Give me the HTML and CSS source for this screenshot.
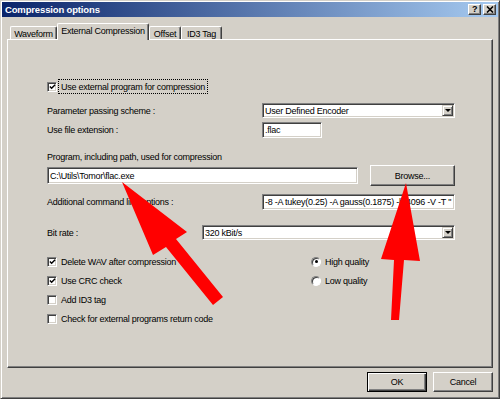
FILE: index.html
```html
<!DOCTYPE html>
<html lang="en">
<head>
    <meta charset="UTF-8">
    <meta name="viewport" content="width=device-width, initial-scale=1.0">
    <title>Compression options</title>
    <link rel="stylesheet" href="styles.css">
</head>
<body>
    <div class="window">
        <div class="titlebar">
            <span class="title">Compression options</span>
            <div class="caption-buttons">
                <span class="caption-btn">?</span>
                <span class="caption-btn">
                    <svg width="8" height="7" viewBox="0 0 8 7"><path d="M1 0.5 L7 6.5 M7 0.5 L1 6.5" stroke="#000" stroke-width="1.6"/></svg>
                </span>
            </div>
        </div>

        <div class="dialog">
            <div class="tabs">
                <div class="tab tab-waveform">Waveform</div>
                <div class="tab tab-external active">External Compression</div>
                <div class="tab tab-offset">Offset</div>
                <div class="tab tab-id3">ID3 Tag</div>
            </div>

            <div class="panel">
                <div class="check-row top-check">
                    <span class="checkbox checked">
                        <svg width="8" height="8" viewBox="0 0 8 8"><path d="M1 3.5 L3 5.5 L7 1.5" stroke="#000" stroke-width="1.7" fill="none"/></svg>
                    </span>
                    <span class="focus-label">Use external program for compression</span>
                </div>

                <div class="field-row row-scheme">
                    <span>Parameter passing scheme :</span>
                    <div class="field combo">
                        <span>User Defined Encoder</span>
                        <span class="combo-btn"><span class="tri"></span></span>
                    </div>
                </div>

                <div class="field-row row-ext">
                    <span>Use file extension :</span>
                    <div class="field ext-field">.flac</div>
                </div>

                <div class="program-label">Program, including path, used for compression</div>

                <div class="program-row">
                    <div class="field path-field">C:\Utils\Tomor\flac.exe</div>
                    <div class="btn browse-btn">Browse...</div>
                </div>

                <div class="field-row row-options">
                    <span>Additional command line options :</span>
                    <div class="field cmd-field">-8 -A tukey(0.25) -A gauss(0.1875) -b 4096 -V -T "</div>
                </div>

                <div class="field-row row-bitrate">
                    <span>Bit rate :</span>
                    <div class="field combo">
                        <span>320 kBit/s</span>
                        <span class="combo-btn"><span class="tri"></span></span>
                    </div>
                </div>

                <div class="options">
                    <div class="option-col checks">
                        <div class="opt">
                            <span class="checkbox checked">
                                <svg width="8" height="8" viewBox="0 0 8 8"><path d="M1 3.5 L3 5.5 L7 1.5" stroke="#000" stroke-width="1.7" fill="none"/></svg>
                            </span>
                            <span>Delete WAV after compression</span>
                        </div>
                        <div class="opt">
                            <span class="checkbox checked">
                                <svg width="8" height="8" viewBox="0 0 8 8"><path d="M1 3.5 L3 5.5 L7 1.5" stroke="#000" stroke-width="1.7" fill="none"/></svg>
                            </span>
                            <span>Use CRC check</span>
                        </div>
                        <div class="opt">
                            <span class="checkbox"></span>
                            <span>Add ID3 tag</span>
                        </div>
                        <div class="opt">
                            <span class="checkbox"></span>
                            <span>Check for external programs return code</span>
                        </div>
                    </div>
                    <div class="option-col radios">
                        <div class="opt">
                            <span class="radio selected"></span>
                            <span>High quality</span>
                        </div>
                        <div class="opt">
                            <span class="radio"></span>
                            <span>Low quality</span>
                        </div>
                    </div>
                </div>
            </div>

            <div class="footer">
                <div class="btn default">OK</div>
                <div class="btn">Cancel</div>
            </div>
        </div>

        <!-- red arrows pasted over the screenshot -->
        <svg class="arrows" width="500" height="399" viewBox="0 0 500 399">
            <polygon points="121,181 186,231 175,238 222,296 212,304 165,246 152,254" fill="#ff0000"/>
            <polygon points="405,182 419,260 403,259 398,319 390,319 393,259 380,258" fill="#ff0000"/>
        </svg>
    </div>
</body>
</html>
```

FILE: styles.css
```css
body {
    margin: 0;
    width: 500px;
    height: 399px;
    overflow: hidden;
    background-color: #d4d0c8;
    font-family: "Liberation Sans", Arial, sans-serif;
    font-size: 9px;
    letter-spacing: -0.25px;
    color: #000;
}
.window {
    position: relative;
    box-sizing: border-box;
    height: 399px;
    padding: 1px;
    border: 1px solid;
    border-color: #d4d0c8 #404040 #404040 #d4d0c8;
    box-shadow: inset 1px 1px #fff, inset -1px -1px #808080;
}
.titlebar {
    height: 15px;
    display: flex;
    align-items: center;
    justify-content: space-between;
    padding: 0 2px 0 3px;
    background: linear-gradient(to right, #0a246a, #a6caf0);
}
.title {
    color: #fff;
    font-weight: bold;
    font-size: 9.5px;
    letter-spacing: -0.15px;
}
.caption-buttons {
    display: flex;
    gap: 2px;
}
.caption-btn {
    box-sizing: border-box;
    width: 13px;
    height: 11px;
    display: flex;
    align-items: center;
    justify-content: center;
    background-color: #d4d0c8;
    border: 1px solid;
    border-color: #fff #404040 #404040 #fff;
    box-shadow: inset -1px -1px #808080;
    font-weight: bold;
    font-size: 9px;
    line-height: 1;
}
.dialog {
    padding: 0 5px;
}
.tabs {
    display: flex;
    align-items: flex-end;
    margin: 6px 0 0 3px;
}
.tab {
    box-sizing: border-box;
    height: 13px;
    display: flex;
    align-items: center;
    justify-content: center;
    white-space: nowrap;
    border-top: 1px solid #fff;
    border-left: 1px solid #fff;
    border-right: 1px solid #404040;
    border-radius: 2px 2px 0 0;
    box-shadow: inset -1px 0 #808080;
    padding-top: 1px;
}
.tab.active {
    position: relative;
    z-index: 1;
    height: 17px;
    margin-bottom: -1px;
    padding-bottom: 3px;
    background-color: #d4d0c8;
}
.tab-waveform { width: 47px; }
.tab-external { width: 92px; }
.tab-offset { width: 32px; }
.tab-id3 { width: 41px; }
.panel {
    box-sizing: border-box;
    height: 329px;
    padding: 0 37px 0 39px;
    border: 1px solid;
    border-color: #fff #404040 #404040 #fff;
    box-shadow: inset -1px -1px #808080;
}
.check-row {
    display: flex;
    align-items: center;
    height: 15px;
}
.top-check {
    margin-top: 39px;
}
.checkbox {
    box-sizing: border-box;
    width: 10px;
    height: 10px;
    flex: none;
    display: flex;
    align-items: center;
    justify-content: center;
    background-color: #fff;
    border: 1px solid;
    border-color: #808080 #fff #fff #808080;
    box-shadow: inset 1px 1px #404040, inset -1px -1px #d4d0c8;
}
.checkbox svg {
    margin: 1px 0 0 1px;
}
.focus-label {
    box-sizing: border-box;
    height: 15px;
    display: flex;
    align-items: center;
    margin-left: 1px;
    padding: 0 2px;
    border: 1px dotted #000;
}
.field-row {
    display: grid;
    grid-template-columns: 215px 1fr;
    align-items: center;
}
.field {
    box-sizing: border-box;
    display: flex;
    align-items: center;
    padding-left: 2px;
    background-color: #fff;
    border: 1px solid;
    border-color: #808080 #fff #fff #808080;
    box-shadow: inset 1px 1px #404040, inset -1px -1px #d4d0c8;
    white-space: nowrap;
    overflow: hidden;
}
.combo {
    height: 15px;
    justify-content: space-between;
    padding-right: 1px;
}
.combo-btn {
    box-sizing: border-box;
    width: 11px;
    height: 11px;
    display: flex;
    align-items: center;
    justify-content: center;
    background-color: #d4d0c8;
    border: 1px solid;
    border-color: #d4d0c8 #404040 #404040 #d4d0c8;
    box-shadow: inset 1px 1px #fff, inset -1px -1px #808080;
}
.tri {
    width: 0;
    height: 0;
    border-left: 3px solid transparent;
    border-right: 3px solid transparent;
    border-top: 3px solid #000;
}
.row-scheme {
    margin-top: 9px;
}
.row-ext {
    margin-top: 4px;
}
.ext-field {
    width: 60px;
    height: 16px;
}
.program-label {
    margin-top: 13px;
    height: 12px;
    line-height: 12px;
}
.program-row {
    margin-top: 2px;
    display: flex;
    align-items: center;
    justify-content: space-between;
}
.path-field {
    width: 311px;
    height: 17px;
}
.btn {
    box-sizing: border-box;
    display: flex;
    align-items: center;
    justify-content: center;
    background-color: #d4d0c8;
    border: 1px solid;
    border-color: #fff #404040 #404040 #fff;
    box-shadow: inset -1px -1px #808080;
}
.browse-btn {
    width: 85px;
    height: 21px;
}
.row-options {
    margin-top: 8px;
}
.cmd-field {
    height: 16px;
}
.row-bitrate {
    margin-top: 15px;
    grid-template-columns: 155px 1fr;
}
.options {
    margin-top: 12px;
    display: flex;
}
.option-col {
    display: flex;
    flex-direction: column;
}
.checks {
    width: 264px;
}
.opt {
    height: 19px;
    display: flex;
    align-items: center;
    gap: 4px;
}
.radio {
    box-sizing: border-box;
    width: 10px;
    height: 10px;
    flex: none;
    display: flex;
    align-items: center;
    justify-content: center;
    border-radius: 50%;
    background-color: #fff;
    border: 1px solid;
    border-color: #808080 #fff #fff #808080;
    box-shadow: inset 1px 1px #404040;
}
.radio.selected::after {
    content: "";
    width: 3px;
    height: 3px;
    border-radius: 50%;
    background-color: #000;
}
.footer {
    display: flex;
    justify-content: flex-end;
    gap: 6px;
    margin-top: 4px;
}
.footer .btn {
    width: 60px;
    height: 20px;
}
.btn.default {
    border-color: #000;
    box-shadow: inset 1px 1px #fff, inset -1px -1px #404040, inset -2px -2px #808080;
}
.arrows {
    position: absolute;
    top: 0;
    left: 0;
    pointer-events: none;
}
```
